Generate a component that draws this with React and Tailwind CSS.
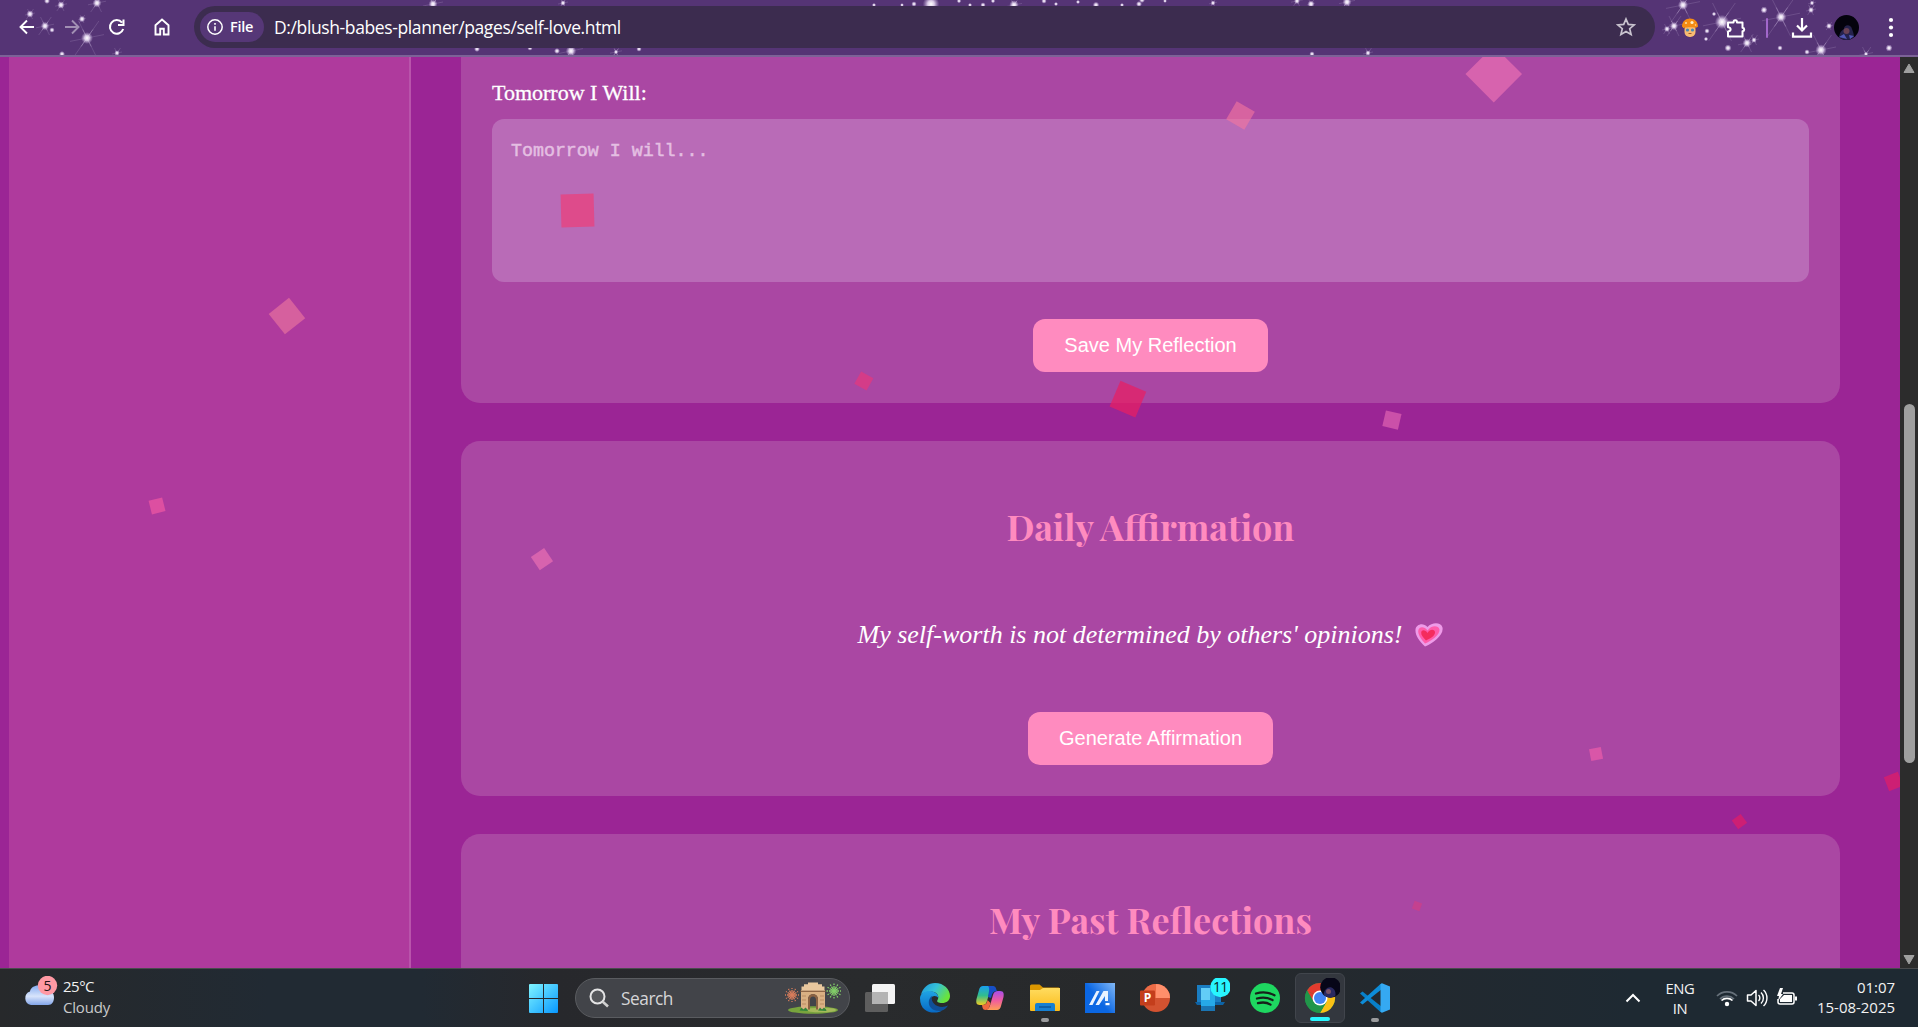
import React from "react";

const STARS = [
  [47, 1, 2, 0], [61, 5, 2.5, 6], [97, 3, 3, 9], [30, 14, 2.5, 5], [45, 26, 2.8, 9], [52, 30, 1.8, 0], [82, 19, 2.2, 4], [87, 38, 4, 17],
  [62, 54, 2, 0], [117, 53, 1.8, 5], [433, 4, 3, 10], [563, 3, 1.8, 5], [477, 49, 2, 0], [530, 48, 1.8, 0], [557, 51, 2, 0], [571, 51, 3.5, 12],
  [616, 52, 1.5, 6], [639, 49, 1.8, 0], [1297, 1, 2, 6], [1311, 4, 2.4, 4], [1347, 2, 3, 8], [1312, 54, 1.8, 0], [1368, 53, 1.8, 5],
  [874, 5, 1.4, 0], [902, 5, 1.3, 0], [914, 4, 1.8, 0], [931, 4, 5.5, 0], [959, 1, 1.5, 0], [970, 5, 1.4, 0], [983, 5, 1.8, 0], [993, 1, 1.5, 0],
  [1014, 5, 3.2, 8], [1044, 1, 1.8, 0], [1056, 4, 1.4, 0], [1078, 2, 1.4, 0], [1096, 5, 2.2, 0], [1122, 5, 1.4, 0], [1139, 4, 2, 0], [1142, 0, 2, 0], [1165, 1, 1.3, 0], [1213, 3, 1.6, 4],
  [1683, 5, 3.4, 17], [1674, 26, 2.8, 10], [1667, 29, 2, 5], [1722, 22, 4.8, 19], [1714, 14, 1.5, 0], [1707, 31, 1.8, 0], [1706, 39, 1.5, 0],
  [1728, 48, 2.4, 0], [1747, 43, 3, 9], [1754, 40, 1.8, 5], [1764, 10, 2.3, 3], [1781, 17, 3.6, 19], [1811, 10, 2, 5], [1812, 3, 1.5, 4],
  [1780, 48, 1.8, 0], [1807, 52, 1.8, 0], [1821, 50, 3.8, 15], [1829, 26, 2, 4], [1889, 48, 2.3, 3], [1866, 54, 1.5, 7],
];

function StarField() {
  return (
    <svg className="absolute inset-0" width="1918" height="55" viewBox="0 0 1918 55">
      <defs>
        <radialGradient id="glow">
          <stop offset="0" stopColor="#fff" />
          <stop offset=".4" stopColor="#f1e6fa" stopOpacity=".85" />
          <stop offset="1" stopColor="#c9b0e0" stopOpacity="0" />
        </radialGradient>
      </defs>
      {STARS.map(([x, y, r, ray], i) => (
        <g key={i} transform={`translate(${x} ${y})`}>
          {ray > 0 && (
            <g stroke="#d8c6ea" strokeWidth=".8">
              <path opacity=".22" d={`M${-ray * 0.5} ${-ray} L${ray * 0.5} ${ray} M${ray * 0.7} ${-ray} L${-ray * 0.7} ${ray} M${-ray} ${ray * 0.2} L${ray} ${-ray * 0.2}`} />
              <path opacity=".4" d={`M${-ray * 0.25} ${-ray * 0.5} L${ray * 0.25} ${ray * 0.5} M${ray * 0.35} ${-ray * 0.5} L${-ray * 0.35} ${ray * 0.5}`} />
            </g>
          )}
          <circle r={r * 1.5} fill="url(#glow)" />
        </g>
      ))}
    </svg>
  );
}

const S = ({ w = 20, h, vb, className = "", children }) => (
  <svg width={w} height={h ?? w} viewBox={vb ?? `0 0 ${w} ${h ?? w}`} fill="none" className={`block shrink-0 ${className}`}>
    {children}
  </svg>
);

function BrowserBar() {
  return (
    <header className="relative h-[57px] shrink-0 overflow-hidden border-b-2 border-[#7c6297] bg-[#553475]">
      <StarField />
      <div className="relative flex h-full items-center text-white">
        <div className="mb-px flex w-[194px] shrink-0 items-center gap-[25px] pl-[17px]">
          <S><path d="M17 10H4M10 3.500 3.500 10l6.500 6.500" stroke="#fff" strokeWidth="1.900" /></S>
          <S className="opacity-45"><path d="M3 10h13M10 3.500 16.500 10 10 16.500" stroke="#fff" strokeWidth="1.900" /></S>
          <S><path d="M16.200 12A6.800 6.800 0 1 1 15 5.600M16.500 2.500v5.500h-5.500" stroke="#fff" strokeWidth="2" /></S>
          <S><path d="M3.500 8.200v9.300h4.700v-5.700h3.600v5.700h4.700V8.200L10 2.600z" stroke="#fff" strokeWidth="1.900" /></S>
        </div>
        <div className="mb-px flex h-[42px] w-[1461px] shrink-0 items-center rounded-full bg-[#3c2c4f] pl-[6px] pr-[19px]">
          <div className="flex h-[30px] w-[64px] items-center gap-[7px] rounded-full bg-[#563777] pl-[7px]">
            <S w={16}>
              <circle cx="8" cy="8" r="7.200" stroke="#fff" strokeWidth="1.500" />
              <path d="M8 7.200v4.500M8 4v1.700" stroke="#fff" strokeWidth="1.600" />
            </S>
            <span className="font-['Open_Sans',sans-serif] text-[14.500px] font-semibold tracking-[-0.3px]">File</span>
          </div>
          <span className="ml-[10px] whitespace-nowrap font-['Open_Sans',sans-serif] text-[17.500px] tracking-[-0.38px]">D:/blush-babes-planner/pages/self-love.html</span>
          <S w={20} className="ml-auto">
            <path d="m10 2 2.300 5.400 5.900.5-4.500 3.800 1.400 5.700-5.100-3-5.100 3 1.400-5.700L1.800 7.900l5.900-.5z" stroke="#c9c4cf" strokeWidth="1.700" />
          </S>
        </div>
        <S w={18} h={20} className="ml-[26px]">
          <rect x="3.500" y="6" width="11" height="13" rx="5" fill="#f8bb72" />
          <path d="M1 8.500C1 3.500 4.500.5 9 .5s8 3 8 8c-1.500 2-4 .8-8 .8s-6.500 1.200-8-.8z" fill="#f58b12" />
          <circle cx="5" cy="5" r="1.100" fill="#ffdc9a" /><circle cx="11" cy="4.500" r="1.600" fill="#fff0c4" /><circle cx="14.500" cy="7" r=".8" fill="#ffdc9a" />
          <circle cx="6.500" cy="12" r="1.600" fill="#4489b6" /><circle cx="11.500" cy="12" r="1.600" fill="#4489b6" />
          <path d="M7.500 15.500h3" stroke="#a35b2b" />
        </S>
        <S w={22} className="ml-[26px]">
          <path d="M3 5.500h5.500C8.500 2.500 12 2.500 12 5.500h5.500v5.200c2.300.3 2.300 3.300 0 3.600v5.200H3v-5c3.500-.3 3.500-4 0-4.300z" stroke="#fff" strokeWidth="2" strokeLinejoin="round" />
        </S>
        <div className="ml-[19px] h-5 w-[2px] rounded bg-[#a267cb]" />
        <S w={22} h={22} className="ml-[23px]">
          <path d="M11 1v12M6 8.500l5 5 5-5M2 15.500v4.200h18v-4.200" stroke="#fff" strokeWidth="2.200" />
        </S>
        <S w={25} className="ml-[21px]">
          <circle cx="12.500" cy="12.500" r="12.500" fill="#04030d" />
          <path d="M5 22c1-5 3-7 5-8 0-5 7-5 8 0 1 3 2 5 2 8-4 4-11 4-15 0z" fill="#25224c" />
          <circle cx="12.500" cy="16" r="3" fill="#694154" /><path d="M5 22l5-3 3 5zM15 20l5 1-4 3z" fill="#5157b5" />
        </S>
        <S w={6} h={22} className="ml-[29px]">
          <circle cx="3" cy="3" r="2.100" fill="#fff" /><circle cx="3" cy="10.500" r="2.100" fill="#fff" /><circle cx="3" cy="18" r="2.100" fill="#fff" />
        </S>
      </div>
    </header>
  );
}

/* Falling confetti: centre x, centre y (inside the viewport), side, rotation, colour */
const CONFETTI = [
  [1494, 16.500, 39.500, 45, "#d763ae"],
  [1240.800, 58, 21, 30, "rgba(245,118,158,.6)"],
  [577, 153, 32.500, -1.500, "#de4b8b"],
  [287.500, 259.300, 26.200, -38.600, "#d6609e"],
  [156.600, 449, 13.500, -14, "#dd4fa1"],
  [541.800, 502.300, 16.200, -34, "#d763ae"],
  [863.700, 323.700, 13.500, 29, "#d43c88"],
  [1127.900, 341.500, 27.700, 23, "rgba(233,30,99,.72)"],
  [1391.300, 362.300, 15.500, 13, "#cb50a9"],
  [1595.500, 697, 11.500, -11, "#d956a8"],
  [1740, 765, 11.300, -36, "#cd1f74"],
  [1893, 724, 15, -21, "#cd1f74"],
  [1416.800, 849, 8, 20, "#c4418f"],
];

const Heading = ({ children }) => (
  <h2 className="whitespace-nowrap text-center font-['Playfair_Display','Liberation_Serif',serif] text-[36px] font-bold leading-[50px] text-[#ff8bbf]">{children}</h2>
);

const Button = ({ children, className }) => (
  <button className={`block h-[53px] shrink-0 whitespace-nowrap rounded-[12px] bg-[#ff8bbf] pb-[2px] font-['Liberation_Sans',sans-serif] text-[20px] text-white ${className}`}>{children}</button>
);

const Heart = () => (
  <S w={28} h={24} vb="0 0 28 24">
    <path d="M10 23.500C4 18 0 12 .5 6.500 1 1.500 8-1 12.500 4 17-1 26-1 27.500 4.500 29 12 18 20 10 23.500z" fill="#ee9be8" />
    <path d="M10 20.500C6 16 3 11.500 3.200 8 3.500 3.500 9 2.500 12.500 7.500 16 2 23.500 2 24.500 6.500 25 12 16 18 10 20.500z" fill="#ff5cab" />
    <path d="M11 17.500C8 14.500 6 12 6.200 9.500 6.500 6.500 10.500 6.500 12.500 10 15 5.500 20 6 20 9.500 20 13 14.500 16 11 17.500z" fill="#f42c5e" />
  </S>
);

function Page() {
  return (
    <div className="relative flex h-[911px] shrink-0 overflow-hidden bg-[#9b2595]">
      <aside className="ml-[9px] w-[402px] shrink-0 border-r-2 border-[#b954ab] bg-[#af3a9d]" />
      <main className="ml-[50px] flex w-[1379px] shrink-0 flex-col gap-[38px]">
        <section className="flex h-[346px] shrink-0 flex-col items-center rounded-b-[19px] bg-[#aa47a3] px-[31px]">
          <label className="mt-[22px] h-[40px] self-start font-['Liberation_Serif',serif] text-[22px] leading-7 text-white [-webkit-text-stroke:0.3px_white]">Tomorrow I Will:</label>
          <div className="h-[163px] w-full shrink-0 rounded-[12px] bg-[#b96bb7] px-[19px] pt-[20px] font-['Liberation_Mono',monospace] text-[18.300px] leading-6 text-[#e4bfe2] [-webkit-text-stroke:0.5px_#e4bfe2]">Tomorrow I will...</div>
          <Button className="mt-[37px] w-[235px]">Save My Reflection</Button>
        </section>
        <section className="flex h-[355px] shrink-0 flex-col items-center rounded-[19px] bg-[#aa47a3] pt-[60px]">
          <Heading>Daily Affirmation</Heading>
          <div className="mt-[66px] flex h-[35px] items-center gap-[12px] pr-px">
            <p className="whitespace-nowrap font-['Liberation_Serif',serif] text-[26px] italic text-white">My self-worth is not determined by others' opinions!</p>
            <Heart />
          </div>
          <Button className="mt-[60px] w-[245px]">Generate Affirmation</Button>
        </section>
        <section className="flex h-[200px] shrink-0 flex-col items-center rounded-t-[19px] bg-[#aa47a3] pt-[60px]">
          <Heading>My Past Reflections</Heading>
        </section>
      </main>
      <div className="pointer-events-none absolute inset-0">
        {CONFETTI.map(([x, y, s, r, c], i) => (
          <i key={i} className="absolute block" style={{ left: x - s / 2, top: y - s / 2, width: s, height: s, background: c, transform: `rotate(${r}deg)` }} />
        ))}
      </div>
      <div className="relative ml-auto flex w-[18px] flex-col items-center bg-[#2c2c2c]">
        <S w={12} h={11} className="mt-[6px]"><path d="M6 1 11 9.500H1z" fill="#9f9f9f" stroke="#9f9f9f" strokeLinejoin="round" /></S>
        <div className="mt-[330px] h-[359px] w-[11px] rounded-full bg-[#9f9f9f]" />
        <S w={12} h={11} className="mb-[3px] mt-auto"><path d="M6 10 11 1.500H1z" fill="#9f9f9f" stroke="#9f9f9f" strokeLinejoin="round" /></S>
      </div>
    </div>
  );
}

const TaskIcon = ({ children, active, mark }) => (
  <div className={`relative flex h-[50px] w-[50px] shrink-0 items-center justify-center rounded-[6px] ${active ? "border border-[#41454c] bg-[#33373e]" : ""}`}>
    {children}
    {mark && <span className={`absolute bottom-px h-1 rounded-full ${active ? "w-5 bg-[#28f5ff]" : "w-2 bg-[#9a9b9d]"}`} />}
  </div>
);

const burst = (cx, cy, r, c) =>
  Array.from({ length: 12 }, (_, i) => {
    const a = (i * Math.PI) / 6;
    return <path key={i} d={`M${cx} ${cy}L${cx + r * Math.cos(a)} ${cy + r * Math.sin(a)}`} stroke={c} strokeWidth="1.300" strokeDasharray="5 1" />;
  });

const IndiaGate = () => (
  <S w={56} h={32}>
    <ellipse cx="28" cy="28" rx="25" ry="3.700" fill="#78a43d" />
    <ellipse cx="36" cy="28" rx="15" ry="2.300" fill="#a5b95b" />
    {burst(7, 13, 7, "#d87d5c")}
    {burst(49, 9, 7.500, "#83ce69")}
    <path d="M16 8h24v19.500h-7V17.500a5 5.500 0 0 0-10 0v10h-7z" fill="#d9b083" />
    <path d="M23 27.500v-10a5 5.500 0 0 1 10 0v10h-2v-9.500a3 3.500 0 0 0-6 0v9.500z" fill="#8b6243" />
    <path d="M16.500 4.500h23V9h-23zM19 2.200h18v2.300H19zM23 .5h10v2H23z" fill="#e8c79e" />
    <path d="M15.500 9.300h25" stroke="#8b6243" strokeWidth="1.300" /><path d="M17 14h4M17 18h4M17 22h4M35 14h4M35 18h4M35 22h4" stroke="#b98b60" />
    <path d="M14.500 28.500l2-3 2 2 2-2 2 2 .5 1.500zM33 28.500l2-3 2 2 2-2 2 2 .5 1.500z" fill="#33853a" />
  </S>
);

function Taskbar() {
  return (
    <footer className="flex h-[59px] shrink-0 items-start border-t border-[#494b4d] bg-[linear-gradient(90deg,#27292b_0%,#212a33_14%,#212a33_22%,#27282c_29%,#292b2d_45%,#27292b_58%,#23292f_72%,#1e2932_85%)] font-['Open_Sans',sans-serif] text-[#f2f2f2]">
      <div className="relative flex w-[518px] shrink-0 pl-[24px] pt-[7px]">
        <S w={34} h={32} vb="0 0 34 32">
          <defs><linearGradient id="cl" x2="0" y2="1"><stop stopColor="#88aef1" /><stop offset=".55" stopColor="#d8e4fb" /><stop offset="1" stopColor="#82a5e9" /></linearGradient></defs>
          <path d="M7 29a7 7 0 0 1-1-13.500C7 9 18 7 21 14c6-1 9 3 9 7.500 0 4-2 7.500-6 7.500z" fill="url(#cl)" />
          <circle cx="23.500" cy="9.500" r="9.700" fill="#ff99a4" />
          <text x="23.500" y="14.700" textAnchor="middle" fontSize="14" fontFamily="Open Sans, sans-serif" fill="#221417">5</text>
        </S>
        <div className="ml-[5px] text-[15px] leading-[21px] tracking-[-0.2px]">
          <div className="tracking-[-0.5px]">25°C</div>
          <div className="text-[#c9cacb]">Cloudy</div>
        </div>
      </div>
      <div className="flex shrink-0 items-center gap-[5px] pt-[4px]">
        <TaskIcon>
          <S w={29}>
            <defs><linearGradient id="wn" x2="1" y2="1"><stop stopColor="#80f5ff" /><stop offset="1" stopColor="#0797ff" /></linearGradient></defs>
            <path d="M0 1a1 1 0 0 1 1-1h13v14H0zM15 0h13a1 1 0 0 1 1 1v13H15zM0 15h14v14H1a1 1 0 0 1-1-1zM15 15h14v13a1 1 0 0 1-1 1H15z" fill="url(#wn)" />
          </S>
        </TaskIcon>
        <div className="ml-[2px] mr-px flex h-[40px] w-[275px] items-center rounded-full border border-[#5a5c60] bg-[#424449] pl-[13px] pr-[8px]">
          <S w={20}><circle cx="8.500" cy="8.500" r="7" stroke="#e4e4e5" strokeWidth="2" fill="#55575b" /><path d="m13.500 13.500 5.500 5" stroke="#d0d0d0" strokeWidth="2.600" /></S>
          <span className="ml-[12px] pt-px text-[17.300px] tracking-[-0.45px] text-[#d6d6d8]">Search</span>
          <div className="ml-auto"><IndiaGate /></div>
        </div>
        <div className="-ml-px flex gap-[5px]">
          <TaskIcon>
            <S w={30} h={28}>
              <rect x="0" y="8" width="23" height="20" rx="1.500" fill="#5e5e5e" />
              <rect x="7" y="0" width="23" height="20" rx="1.500" fill="#f4f4f4" />
              <path d="M7 8h16v12H8.500A1.500 1.500 0 0 1 7 18.500z" fill="#b4b4b4" />
            </S>
          </TaskIcon>
          <TaskIcon>
            <S w={30}>
              <defs>
                <linearGradient id="e1" x2="1" y2=".5"><stop stopColor="#1c95dd" /><stop offset=".5" stopColor="#35c1d8" /><stop offset="1" stopColor="#69e33b" /></linearGradient>
                <linearGradient id="e2" x2="0" y2="1"><stop stopColor="#1fa5e4" /><stop offset="1" stopColor="#0869c4" /></linearGradient>
              </defs>
              <path d="M1 12C2.500 4.500 8.500 0 15 0c9 0 15 6.500 15 13 0 4.500-3.500 7-8 7-3.500 0-5.500-1.200-4.700-2.500 3-5-1-9-6.300-9C6 8.500 2.500 10 1 12z" fill="url(#e1)" />
              <path d="M0 15C.5 10 5 7.800 10 8c5 .2 8.500 3.500 8.500 7-2-3-7-3-8 1.500C9 23 15 28 22 27.500 19 30.500 0 33 0 15z" fill="url(#e2)" />
              <path d="M12 13c-6 4-4 17 10 14.500 2.500-.8 5-3 6-5-8 4-18-1-16-9.500z" fill="#104f97" />
            </S>
          </TaskIcon>
          <TaskIcon>
            <S w={28} h={26}>
              <defs>
                <linearGradient id="c1" x2="0" y2="1"><stop stopColor="#189ff0" /><stop offset=".5" stopColor="#31bd8d" /><stop offset="1" stopColor="#f2cd21" /></linearGradient>
                <linearGradient id="c2" x2="0" y2="1"><stop stopColor="#a74dea" /><stop offset=".5" stopColor="#ef5c9f" /><stop offset="1" stopColor="#ff9d55" /></linearGradient>
              </defs>
              <path d="M7 1h11c-3 1-4 4-5 8l-2 7c-1 3-2 4-5 4H4c-4 0-4-3-3.500-6L3 5c.6-2.500 2-4 4-4z" fill="url(#c1)" />
              <path d="M21 25H10c3-1 4-4 5-8l2-7c1-3 2-4 5-4h2c4 0 4 3 3.500 6L25 21c-.6 2.500-2 4-4 4z" fill="url(#c2)" />
              <path d="M12 1h5c3 0 3 3 4 5-5 0-5 4-6 7l-3-1c1-6 2-9 0-11z" fill="#174fc7" />
              <path d="M6 20c4 0 5-2 5.500-5l3 3c-1 4-2 7-5 7-3 0-3-3-3.500-5z" fill="#ef6940" />
            </S>
          </TaskIcon>
          <TaskIcon mark>
            <S w={30} h={28} className="mb-px">
              <defs><linearGradient id="fo" x2="0" y2="1"><stop stopColor="#ffdc60" /><stop offset="1" stopColor="#fbbb18" /></linearGradient></defs>
              <path d="M0 2a1.500 1.500 0 0 1 1.500-1.500h8L13 3.500h15.500A1.500 1.500 0 0 1 30 5v5H0z" fill="#dc9700" />
              <path d="M0 6h10l3-2h17v22a1 1 0 0 1-1 1H1a1 1 0 0 1-1-1z" fill="url(#fo)" />
              <path d="M5 21a2 2 0 0 1 2-2h16a2 2 0 0 1 2 2v6H5z" fill="#1680d2" /><path d="M9 23h12" stroke="#09539a" strokeWidth="1.400" />
            </S>
          </TaskIcon>
          <TaskIcon>
            <S w={30}>
              <defs><linearGradient id="my" x1=".4" y1=".5" x2="1" y2="0"><stop stopColor="#0b67e3" /><stop offset="1" stopColor="#82b8f6" /></linearGradient></defs>
              <path d="M0 0h30v30H0z" fill="url(#my)" />
              <path d="M4 22 11.500 8h3L7.500 22zM10.500 22 18.500 8H23v10h-3v-5l-6 9z" fill="#e9f3ff" /><path d="M20.500 20h4v2.200h-4z" fill="#fff" />
            </S>
          </TaskIcon>
          <TaskIcon>
            <S w={30} h={28}>
              <circle cx="16" cy="14" r="14" fill="#d35230" /><path d="M16 0a14 14 0 0 1 14 14H16z" fill="#ff8f6b" /><path d="M2 14A14 14 0 0 1 16 0v14z" fill="#ed6c47" />
              <rect x="0" y="6.500" width="15" height="15" rx="1" fill="#c43e1c" />
              <text x="7.500" y="18.200" textAnchor="middle" fontFamily="Open Sans, sans-serif" fontWeight="700" fontSize="12" fill="#fff">P</text>
            </S>
          </TaskIcon>
          <TaskIcon>
            <S w={40} h={40}>
              <path d="M7 7h24v17H7z" fill="#1a7dc2" /><path d="M5 24h30l-2 3H7z" fill="#0d63a6" />
              <rect x="11" y="10" width="14" height="23" fill="#26a9e8" /><path d="M11 10h9v12h-9z" fill="#62cdf7" /><path d="M11 28h14v5H11z" fill="#1a75b3" />
              <circle cx="30.500" cy="9" r="10.200" fill="#28f5ff" />
              <text x="30.300" y="14.200" textAnchor="middle" fontFamily="Open Sans, sans-serif" fontSize="14" letterSpacing="-.8" fill="#092426">11</text>
            </S>
          </TaskIcon>
          <TaskIcon>
            <S w={30}>
              <circle cx="15" cy="15" r="15" fill="#1ed760" />
              <path d="M6 10.500c6-1.800 13-1.200 18.500 1.800M7 15.500c5-1.500 11-1 15.500 1.600M8 20.200c4.500-1.200 9-.8 12.500 1.400" stroke="#17211b" strokeWidth="2.300" strokeLinecap="round" />
            </S>
          </TaskIcon>
          <TaskIcon active mark>
            <S w={40} h={40}>
              <circle cx="20" cy="20" r="15" fill="#21964a" />
              <path d="M20 20 7 12.500A15 15 0 0 1 33 12.500V16H20z" fill="#e33b2e" />
              <path d="M20 12.500h13A15 15 0 0 1 20 35l6.500-11.200z" fill="#fbc116" />
              <path d="M7 12.500 13.500 23.800 20 20z" fill="#e33b2e" /><path d="M7 12.500A15 15 0 0 0 20 35l6.500-11.200H13.500z" fill="#21964a" />
              <circle cx="20" cy="20" r="7.500" fill="#fff" /><circle cx="20" cy="20" r="6" fill="#4285f4" />
              <circle cx="30.500" cy="9.500" r="10.300" fill="#070618" />
              <path d="M23.500 16.500c1-5 4-8 8-7 4 2 4 5 4 8-4 3-8 3-12-1z" fill="#2a2961" /><circle cx="28.500" cy="13.500" r="2.500" fill="#785166" />
            </S>
          </TaskIcon>
          <TaskIcon mark>
            <S w={30}>
              <path d="m0 10.500 2.500-2L22 24v5.500L20.500 29z" fill="#087fc8" />
              <path d="m0 19.500 2.500 2L22 6V.5L20.500 1z" fill="#0d8cd8" />
              <path d="m22 .2 8 3.300v23L22 29.800l-1.500-1V1.200z" fill="#35a9f2" />
            </S>
          </TaskIcon>
        </div>
      </div>
      <div className="ml-auto flex h-full items-center pr-[23px] text-[14.800px] leading-[20px] tracking-[-0.4px]">
        <S w={16} h={10}><path d="m1.500 8.500 6.500-6.500 6.500 6.500" stroke="#fff" strokeWidth="2" /></S>
        <div className="ml-[24px] w-[30px] pb-px text-center">ENG<br />IN</div>
        <S w={22} h={18} className="ml-[21px]">
          <path d="M1 7a14 14 0 0 1 20 0M4 10a10 10 0 0 1 14 0" stroke="#66707a" strokeWidth="1.700" />
          <path d="M5.500 11.500a8 8 0 0 1 11 0" stroke="#fff" strokeWidth="1.700" /><circle cx="11" cy="15" r="2.200" fill="#fff" />
        </S>
        <S w={22} h={20} className="ml-[8px]">
          <path d="M1.500 7h3.500l5-4.500v15L5 13H1.500z" stroke="#fff" strokeWidth="1.500" strokeLinejoin="round" />
          <path d="M12.500 7a4 4 0 0 1 0 6M15 4.500a7.500 7.500 0 0 1 0 11M17.500 2a11 11 0 0 1 0 16" stroke="#fff" strokeWidth="1.400" />
        </S>
        <S w={22} h={20} className="ml-[8px]">
          <path d="M7 5h9a2 2 0 0 1 2 2v7a2 2 0 0 1-2 2H4a2 2 0 0 1-2-2v-3" stroke="#fff" strokeWidth="1.500" />
          <path d="M8 7h8v7H4v-3z" fill="#fff" /><path d="M19 8.500h2v4h-2z" fill="#fff" /><path d="M4 0 1 8h2l-1 5 5-7H5l2-6z" fill="#fff" />
        </S>
        <div className="ml-[12px] w-[85px] whitespace-nowrap pb-[3px] text-right text-[15px] leading-[20px] tracking-[-0.03px]">01:07<br />15-08-2025</div>
      </div>
    </footer>
  );
}

export default function App() {
  return (
    <div className="flex h-[1027px] w-[1918px] flex-col overflow-hidden">
      <BrowserBar />
      <Page />
      <Taskbar />
    </div>
  );
}
